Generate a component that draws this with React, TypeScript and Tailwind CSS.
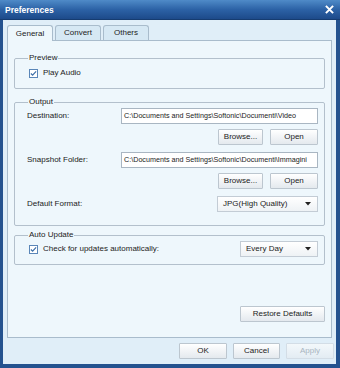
import { type ReactNode } from "react";

const font = { fontFamily: '"Liberation Sans", Tahoma, sans-serif' };

function Check({ label }: { label: string }) {
    return (
        <div className="flex flex-row items-center gap-[5px]">
            <div className="w-[9px] h-[9px] border border-[#5a86b8] bg-white flex items-center justify-center">
                <svg width="7" height="7" viewBox="0 0 8 8">
                    <path d="M1 4 L3 6 L7 1.5" fill="none" stroke="#3a6ea8" strokeWidth="1.3" />
                </svg>
            </div>
            <span>{label}</span>
        </div>
    )
}

function Button({ children, w, disabled }: { children: ReactNode, w: string, disabled?: boolean }) {
    return (
        <div className={`${w} h-[16px] flex items-center justify-center border rounded-[1px] bg-gradient-to-b ${disabled ? "border-[#d3dde6] from-[#f3f8fb] to-[#e3ecf3] text-[#a9b5c0]" : "border-[#bcc6cf] from-[#ffffff] to-[#e4e9ee] text-[#222]"}`}>
            {children}
        </div>
    )
}

function Select({ value, w }: { value: string, w: string }) {
    return (
        <div className={`${w} h-[16px] flex flex-row items-center justify-between pl-[5px] pr-[6px] border border-[#c3ccd5] bg-gradient-to-b from-[#ffffff] to-[#eef2f5]`}>
            <span>{value}</span>
            <svg width="6" height="4" viewBox="0 0 6 4"><path d="M0 0 H6 L3 3.5 Z" fill="#222" /></svg>
        </div>
    )
}

function Input({ value }: { value: string }) {
    return (
        <div className="w-[197px] h-[16px] flex items-center px-[2px] border border-[#a9b6c2] bg-white whitespace-nowrap overflow-hidden text-[7.2px]">
            {value}
        </div>
    )
}

function Group({ title, h, children }: { title: string, h: string, children: ReactNode }) {
    return (
        <fieldset className={`${h} border border-[#b3c0cc] rounded-[2px] pl-[12px] pr-[6px]`}>
            <legend className="ml-[1px] px-[1px] leading-[12px] text-[#222]">{title}</legend>
            {children}
        </fieldset>
    )
}

export default function App() {

    const tabs = ["General", "Convert", "Others"]

    return (
        <div className="w-[340px] h-[368px] flex flex-col bg-[#24528f] text-[8px] leading-[10px] text-[#222]" style={font}>
            <div className="h-[20px] flex flex-row items-center justify-between pl-[5px] pr-[6px] bg-gradient-to-b from-[#4f8bc8] via-[#2c62a6] to-[#1d4a8a] border-b border-[#163c70]">
                <span className="text-white font-bold text-[8.5px]">Preferences</span>
                <svg width="9" height="9" viewBox="0 0 10 10">
                    <path d="M1 1 L9 9 M9 1 L1 9" stroke="#ffffff" strokeWidth="2.2" />
                </svg>
            </div>

            <div className="flex-1 flex flex-col ml-[3px] mr-[4px] mb-[4px] px-[4px] pt-[4px] bg-[#e0eef8]">
                <div className="flex flex-row h-[16px] items-end gap-[2px]">
                    {tabs.map((t, i) => (
                        <div key={t} className={`w-[46px] flex items-center justify-center border border-b-0 border-[#a9bccc] rounded-t-[3px] ${i == 0 ? "h-[16px] bg-[#eef7fc] -mb-[1px] z-10" : "h-[15px] bg-[#d6e8f4]"}`}>
                            {t}
                        </div>
                    ))}
                </div>

                <div className="h-[298px] flex flex-col border border-[#a9bccc] bg-[#eef7fc] pt-[11px] px-[6px]">
                    <Group title="Preview" h="h-[37px]">
                        <div className="pt-[4px] pl-[2px]">
                            <Check label="Play Audio" />
                        </div>
                    </Group>

                    <div className="mt-[7px]">
                        <Group title="Output" h="h-[130px]">
                            <div className="flex flex-col gap-[7px]">
                                <div className="flex flex-col gap-[5px]">
                                    <div className="flex flex-row items-center justify-between">
                                        <span>Destination:</span>
                                        <Input value="C:\Documents and Settings\Softonic\Documenti\Video" />
                                    </div>
                                    <div className="flex flex-row justify-end gap-[7px]">
                                        <Button w="w-[45px]">Browse...</Button>
                                        <Button w="w-[48px]">Open</Button>
                                    </div>
                                </div>
                                <div className="flex flex-col gap-[5px]">
                                    <div className="flex flex-row items-center justify-between">
                                        <span>Snapshot Folder:</span>
                                        <Input value="C:\Documents and Settings\Softonic\Documenti\Immagini" />
                                    </div>
                                    <div className="flex flex-row justify-end gap-[7px]">
                                        <Button w="w-[45px]">Browse...</Button>
                                        <Button w="w-[48px]">Open</Button>
                                    </div>
                                </div>
                                <div className="flex flex-row items-center justify-between">
                                    <span>Default Format:</span>
                                    <Select value="JPG(High Quality)" w="w-[101px]" />
                                </div>
                            </div>
                        </Group>
                    </div>

                    <div className="mt-[3px]">
                        <Group title="Auto Update" h="h-[36px]">
                            <div className="flex flex-row items-center justify-between pl-[2px]">
                                <Check label="Check for updates automatically:" />
                                <Select value="Every Day" w="w-[78px]" />
                            </div>
                        </Group>
                    </div>

                    <div className="flex-1 flex flex-row justify-end items-end pb-[15px]">
                        <Button w="w-[85px]">Restore Defaults</Button>
                    </div>
                </div>

                <div className="flex-1 flex flex-row justify-end items-center gap-[6px] -mr-[2px]">
                    <Button w="w-[48px]">OK</Button>
                    <Button w="w-[47px]">Cancel</Button>
                    <Button w="w-[48px]" disabled>Apply</Button>
                </div>
            </div>
        </div>
    )
}
